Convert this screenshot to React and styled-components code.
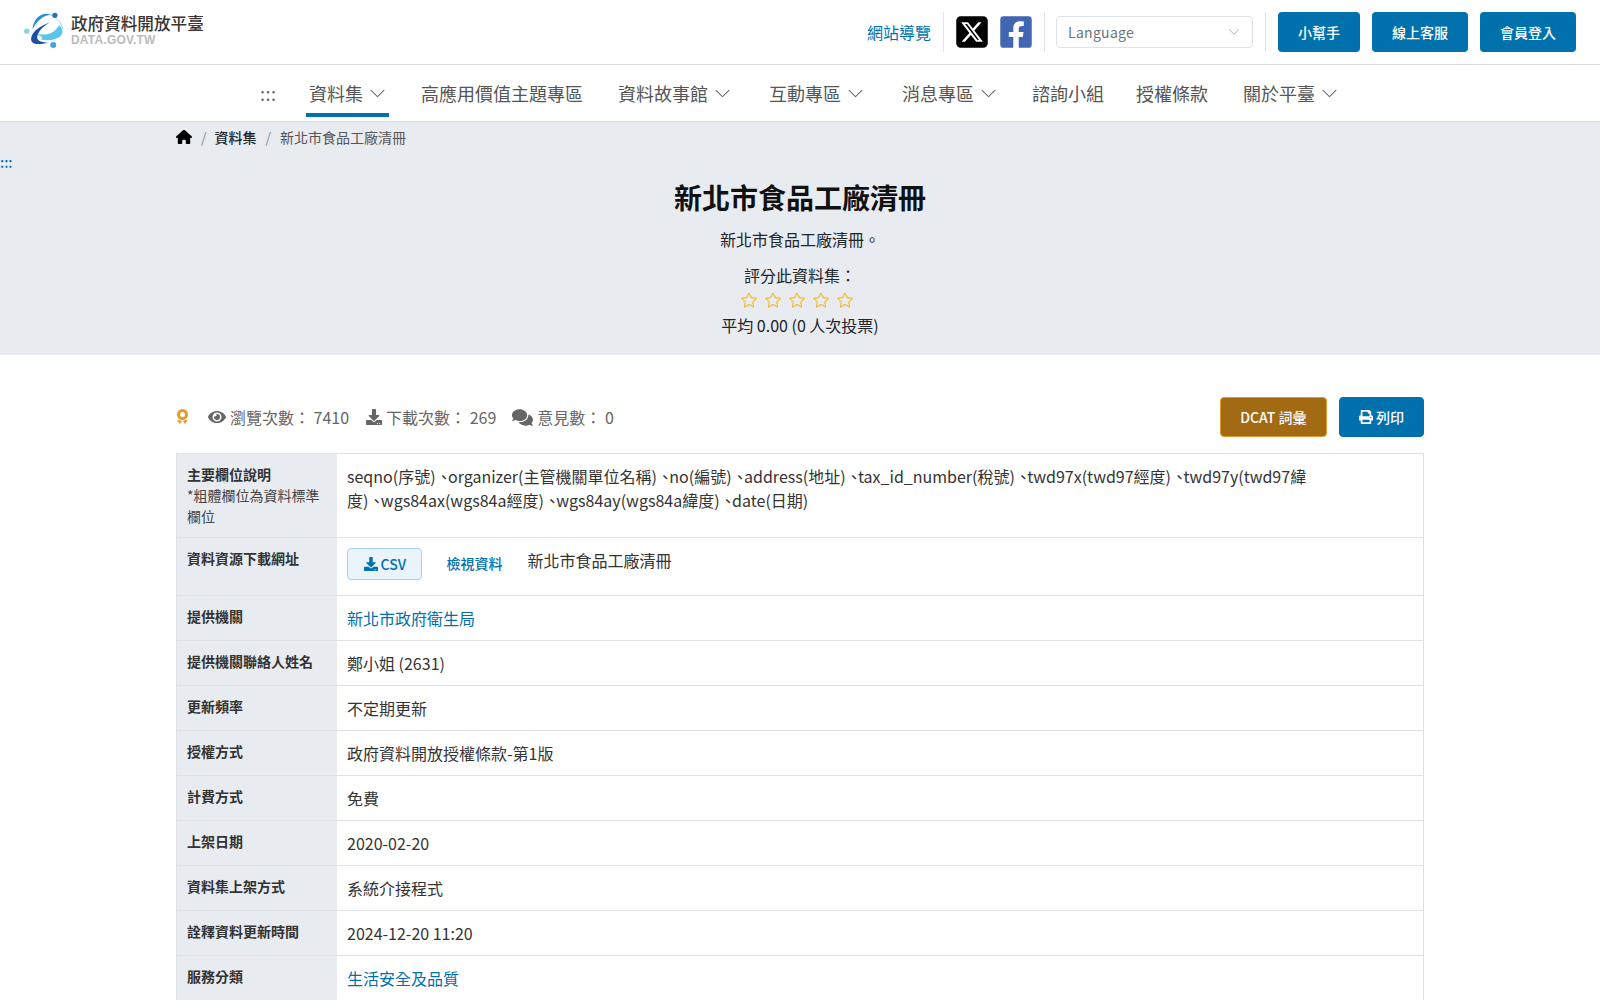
import React from "react";
import styled, { createGlobalStyle } from "styled-components";
import { FaEye, FaDownload, FaComments, FaPrint, FaFacebookSquare } from "react-icons/fa";
import { FaSquareXTwitter, FaHouse } from "react-icons/fa6";
import { BsChevronDown, BsStar } from "react-icons/bs";

const Global = createGlobalStyle`
  html, body { margin: 0; padding: 0; background: #fff; overflow: hidden; height: 1000px; }
  body { font-family: "Noto Sans CJK TC", "Noto Sans", sans-serif; font-size: 16px; color: #212529; line-height: 1.5; }
  a { text-decoration: none; color: inherit; }
  * { box-sizing: border-box; }
`;

const TopBar = styled.header`
  height: 65px;
  display: flex;
  align-items: flex-start;
  justify-content: space-between;
  padding: 12px 24px 0;
  border-bottom: 1px solid #d9dde8;
`;
const Brand = styled.a`
  display: flex;
  align-items: center;
  gap: 7px;
`;
const BrandText = styled.div`
  display: flex;
  flex-direction: column;
`;
const BrandName = styled.span`
  font-size: 16.6px;
  line-height: 19px;
  font-weight: 500;
  color: #3a3535;
`;
const BrandSub = styled.span`
  font-family: "Liberation Sans", sans-serif;
  font-size: 12px;
  line-height: 15px;
  font-weight: 700;
  letter-spacing: 0.2px;
  color: #bbbbbd;
`;
const TopRight = styled.div`
  display: flex;
  align-items: center;
  height: 40px;
`;
const SiteMap = styled.a`
  color: #0071ad;
  width: 76px;
  height: 40px;
  display: flex;
  align-items: center;
`;
const Sep = styled.span`
  width: 1px;
  height: 40px;
  margin-left: ${(p) => p.$ml || 0}px;
  background: #e2e5ec;
  flex: none;
`;
const Social = styled.a`
  display: flex;
  width: 32px;
  height: 32px;
  align-items: center;
  justify-content: center;
  margin-left: ${(p) => p.$ml}px;
  color: ${(p) => p.$color};
`;
const LangSelect = styled.div`
  width: 197px;
  height: 32px;
  margin: 0 12px 0 11px;
  border: 1px solid #dee2e6;
  border-radius: 4px;
  padding: 0 12px 0 11px;
  display: flex;
  align-items: center;
  justify-content: space-between;
  font-size: 14px;
  letter-spacing: 0.3px;
  color: #6c757d;
`;
const BlueButton = styled.a`
  height: 40px;
  padding: 0 20px;
  margin-left: 12px;
  border-radius: 4px;
  background: #0071ad;
  color: #fff;
  font-size: 14px;
  font-weight: 500;
  display: flex;
  align-items: center;
`;
const Nav = styled.nav`
  height: 57px;
  display: flex;
  justify-content: center;
  border-bottom: 1px solid #d9dde8;
  padding-right: 1px;
`;
const NavDots = styled.a`
  width: 48px;
  color: #666;
  font-size: 18px;
  font-weight: 400;
  line-height: 56px;
  padding-left: 2px;
  letter-spacing: 0.5px;
`;
const NavItem = styled.a`
  height: 56px;
  padding: 1px 3px 0;
  margin-right: ${(p) => p.$mr}px;
  display: flex;
  align-items: center;
  gap: 6px;
  font-size: 18px;
  color: #555;
  position: relative;
`;
const ActiveLine = styled.span`
  position: absolute;
  left: 0;
  right: 0;
  bottom: 4px;
  height: 4px;
  background: #0071ad;
`;
const Hero = styled.section`
  background: #e8ebf0;
  height: 233px;
  position: relative;
`;
const Crumbs = styled.ol`
  width: 1248px;
  margin: 0 auto;
  padding: 0;
  list-style: none;
  display: flex;
  align-items: center;
  font-size: 14px;
  height: 30px;
  color: #555;
`;
const Crumb = styled.li`
  display: flex;
  align-items: center;
  font-weight: ${(p) => (p.$bold ? 500 : 400)};
  color: ${(p) => (p.$bold ? "#212529" : "#555")};
`;
const CrumbSep = styled.span`
  margin: 0 ${(p) => p.$mr || 8}px 0 9px;
  color: #8a8f98;
`;
const SkipDots = styled.a`
  position: absolute;
  left: 0;
  top: 30px;
  color: #0071ad;
  font-weight: 500;
  font-size: 14px;
  line-height: 20px;
`;
const HeroBody = styled.div`
  text-align: center;
  padding-top: 24px;
`;
const Title = styled.h1`
  margin: 0;
  font-size: 28px;
  line-height: 42px;
  font-weight: 700;
  color: #111;
`;
const Desc = styled.p`
  margin: 9px 0 0;
  line-height: 24px;
  color: #212529;
`;
const RateLabel = styled.div`
  margin-top: 12px;
  line-height: 24px;
`;
const Stars = styled.div`
  display: flex;
  justify-content: center;
  gap: 8px;
  color: #f5b92e;
  height: 25px;
  padding: 1px 6px 0 0;
  align-items: center;
`;
const Avg = styled.div`
  line-height: 26px;
`;
const Main = styled.main`
  width: 1248px;
  margin: 0 auto;
  padding-top: 42px;
`;
const StatsBar = styled.div`
  display: flex;
  align-items: center;
  justify-content: space-between;
  height: 40px;
  margin-bottom: 16px;
`;
const Stats = styled.div`
  display: flex;
  align-items: center;
  color: #666;
`;
const Stat = styled.span`
  display: flex;
  align-items: center;
  gap: 4px;
  margin-left: ${(p) => p.$ml}px;
`;
const Actions = styled.div`
  display: flex;
  gap: 12px;
`;
const ActionButton = styled.a`
  height: 40px;
  padding: 0 ${(p) => p.$px}px;
  border-radius: 4px;
  background: ${(p) => p.$bg};
  border: 1px solid ${(p) => p.$border};
  color: #fff;
  font-size: 14px;
  font-weight: 500;
  display: flex;
  align-items: center;
  gap: 3px;
`;
const Table = styled.div`
  border: 1px solid #dee2e6;
  border-bottom: none;
`;
const Row = styled.div`
  display: grid;
  grid-template-columns: 160px 1fr;
  border-bottom: 1px solid #dee2e6;
`;
const Th = styled.div`
  background: #e8ebf0;
  padding: 10px;
  font-size: 14px;
  line-height: 21px;
  font-weight: 700;
  color: #333;
`;
const ThNote = styled.div`
  font-weight: 400;
  color: #444;
`;
const Td = styled.div`
  padding: 10px;
  line-height: 24px;
  color: #333;
  max-width: 990px;
  min-height: 44px;
`;
const Comma = styled.span`
  font-feature-settings: "palt";
  margin-left: 4.4px;
`;
const TdLink = styled.a`
  color: #0071ad;
`;
const ResourceCell = styled(Td)`
  display: flex;
  align-items: flex-start;
  max-width: none;
  padding-bottom: 15px;
`;
const CsvButton = styled.a`
  height: 32px;
  padding: 0 15.5px;
  display: flex;
  align-items: center;
  gap: 3px;
  background: #eaf4fd;
  border: 1px solid #a8d2f3;
  border-radius: 4px;
  font-size: 14px;
  font-weight: 500;
  color: #0071ad;
`;
const ViewLink = styled.a`
  margin-left: 24px;
  margin-top: 3px;
  font-size: 14px;
  font-weight: 500;
  line-height: 24px;
  color: #0071ad;
`;
const ResName = styled.span`
  margin-left: 25px;
`;

const Logo = () => (
  <svg width="40" height="37" viewBox="72 40 120 112">
    <path d="M108 104 C130 112 160 110 178 80 C195 95 190 115 165 122 C150 127 135 126 122 123 C135 118 118 112 108 104 Z" fill="#5cc6ea" />
    <path d="M150 48 C170 55 185 72 189 92" fill="none" stroke="#8ed6f0" strokeWidth="3" />
    <path d="M97 92 C100 60 125 38 152 48 C130 50 112 65 97 92 Z" fill="#2d8fd5" />
    <path d="M150 72 C120 82 95 100 93 120 C92 135 105 142 145 133 C120 132 108 125 112 112 C116 98 130 82 150 72 Z" fill="#1c4fa3" />
    <circle cx="165" cy="50" r="8" fill="#2a6fc0" />
    <circle cx="80" cy="98" r="8" fill="#85d0f0" />
    <circle cx="160" cy="140" r="9" fill="#3da6de" />
  </svg>
);

const Medal = () => (
  <svg width="13" height="16" viewBox="0 0 13 16">
    <circle cx="6.5" cy="5.5" r="4" fill="none" stroke="#e89b2c" strokeWidth="3" />
    <path d="M3 10.5 L1 12.5 L3 13 L3.5 15.5 L6 12.5 Z M10 10.5 L12 12.5 L10 13 L9.5 15.5 L7 12.5 Z" fill="#e89b2c" />
  </svg>
);

const Chev = () => <BsChevronDown size={17} color="#666" />;

const rows = [
  ["提供機關", <TdLink href="#">新北市政府衛生局</TdLink>],
  ["提供機關聯絡人姓名", "鄭小姐 (2631)"],
  ["更新頻率", "不定期更新"],
  ["授權方式", "政府資料開放授權條款-第1版"],
  ["計費方式", "免費"],
  ["上架日期", "2020-02-20"],
  ["資料集上架方式", "系統介接程式"],
  ["詮釋資料更新時間", "2024-12-20 11:20"],
  ["服務分類", <TdLink href="#">生活安全及品質</TdLink>],
];

const fields = ["seqno(序號)", "organizer(主管機關單位名稱)", "no(編號)", "address(地址)", "tax_id_number(稅號)", "twd97x(twd97經度)", "twd97y(twd97緯度)", "wgs84ax(wgs84a經度)", "wgs84ay(wgs84a緯度)", "date(日期)"];

export default function App() {
  return (
    <>
      <Global />
      <TopBar>
        <Brand href="#">
          <Logo />
          <BrandText>
            <BrandName>政府資料開放平臺</BrandName>
            <BrandSub>DATA.GOV.TW</BrandSub>
          </BrandText>
        </Brand>
        <TopRight>
          <SiteMap href="#">網站導覽</SiteMap>
          <Sep />
          <Social href="#" $ml={12} $color="#000"><FaSquareXTwitter size={36} /></Social>
          <Social href="#" $ml={12} $color="#4267b2"><FaFacebookSquare size={36} /></Social>
          <Sep $ml={12} />
          <LangSelect>Language<BsChevronDown size={12} color="#a9aeb6" /></LangSelect>
          <Sep />
          <BlueButton href="#">小幫手</BlueButton>
          <BlueButton href="#">線上客服</BlueButton>
          <BlueButton href="#">會員登入</BlueButton>
        </TopRight>
      </TopBar>
      <Nav>
        <NavDots href="#">:::</NavDots>
        <NavItem href="#" $mr={29}>資料集<Chev /><ActiveLine /></NavItem>
        <NavItem href="#" $mr={29}>高應用價值主題專區</NavItem>
        <NavItem href="#" $mr={32}>資料故事館<Chev /></NavItem>
        <NavItem href="#" $mr={32}>互動專區<Chev /></NavItem>
        <NavItem href="#" $mr={29}>消息專區<Chev /></NavItem>
        <NavItem href="#" $mr={26}>諮詢小組</NavItem>
        <NavItem href="#" $mr={29}>授權條款</NavItem>
        <NavItem href="#" $mr={0}>關於平臺<Chev /></NavItem>
      </Nav>
      <Hero>
        <Crumbs>
          <Crumb><FaHouse size={16} color="#000" /></Crumb>
          <CrumbSep>/</CrumbSep>
          <Crumb $bold>資料集</Crumb>
          <CrumbSep $mr={9}>/</CrumbSep>
          <Crumb>新北市食品工廠清冊</Crumb>
        </Crumbs>
        <SkipDots href="#">:::</SkipDots>
        <HeroBody>
          <Title>新北市食品工廠清冊</Title>
          <Desc>新北市食品工廠清冊。</Desc>
          <RateLabel>評分此資料集：</RateLabel>
          <Stars>
            {[0, 1, 2, 3, 4].map((i) => <BsStar key={i} size={16} />)}
          </Stars>
          <Avg>平均 0.00 (0 人次投票)</Avg>
        </HeroBody>
      </Hero>
      <Main>
        <StatsBar>
          <Stats>
            <Medal />
            <Stat $ml={19}><FaEye size={18} />瀏覽次數： 7410</Stat>
            <Stat $ml={17}><FaDownload size={16} />下載次數： 269</Stat>
            <Stat $ml={16}><FaComments size={21} />意見數： 0</Stat>
          </Stats>
          <Actions>
            <ActionButton href="#" $px={19.5} $bg="#a36a14" $border="#e29a2e">DCAT 詞彙</ActionButton>
            <ActionButton href="#" $px={19} $bg="#0071ad" $border="#0071ad"><FaPrint size={14} />列印</ActionButton>
          </Actions>
        </StatsBar>
        <Table>
          <Row>
            <Th>主要欄位說明<ThNote>*粗體欄位為資料標準欄位</ThNote></Th>
            <Td>
              {fields.map((f, i) => (
                <React.Fragment key={f}>
                  {i > 0 && <Comma>、</Comma>}
                  {f}
                </React.Fragment>
              ))}
            </Td>
          </Row>
          <Row>
            <Th>資料資源下載網址</Th>
            <ResourceCell>
              <CsvButton href="#"><FaDownload size={14} />CSV</CsvButton>
              <ViewLink href="#">檢視資料</ViewLink>
              <ResName>新北市食品工廠清冊</ResName>
            </ResourceCell>
          </Row>
          {rows.map(([k, v]) => (
            <Row key={k}>
              <Th>{k}</Th>
              <Td>{v}</Td>
            </Row>
          ))}
        </Table>
      </Main>
    </>
  );
}
